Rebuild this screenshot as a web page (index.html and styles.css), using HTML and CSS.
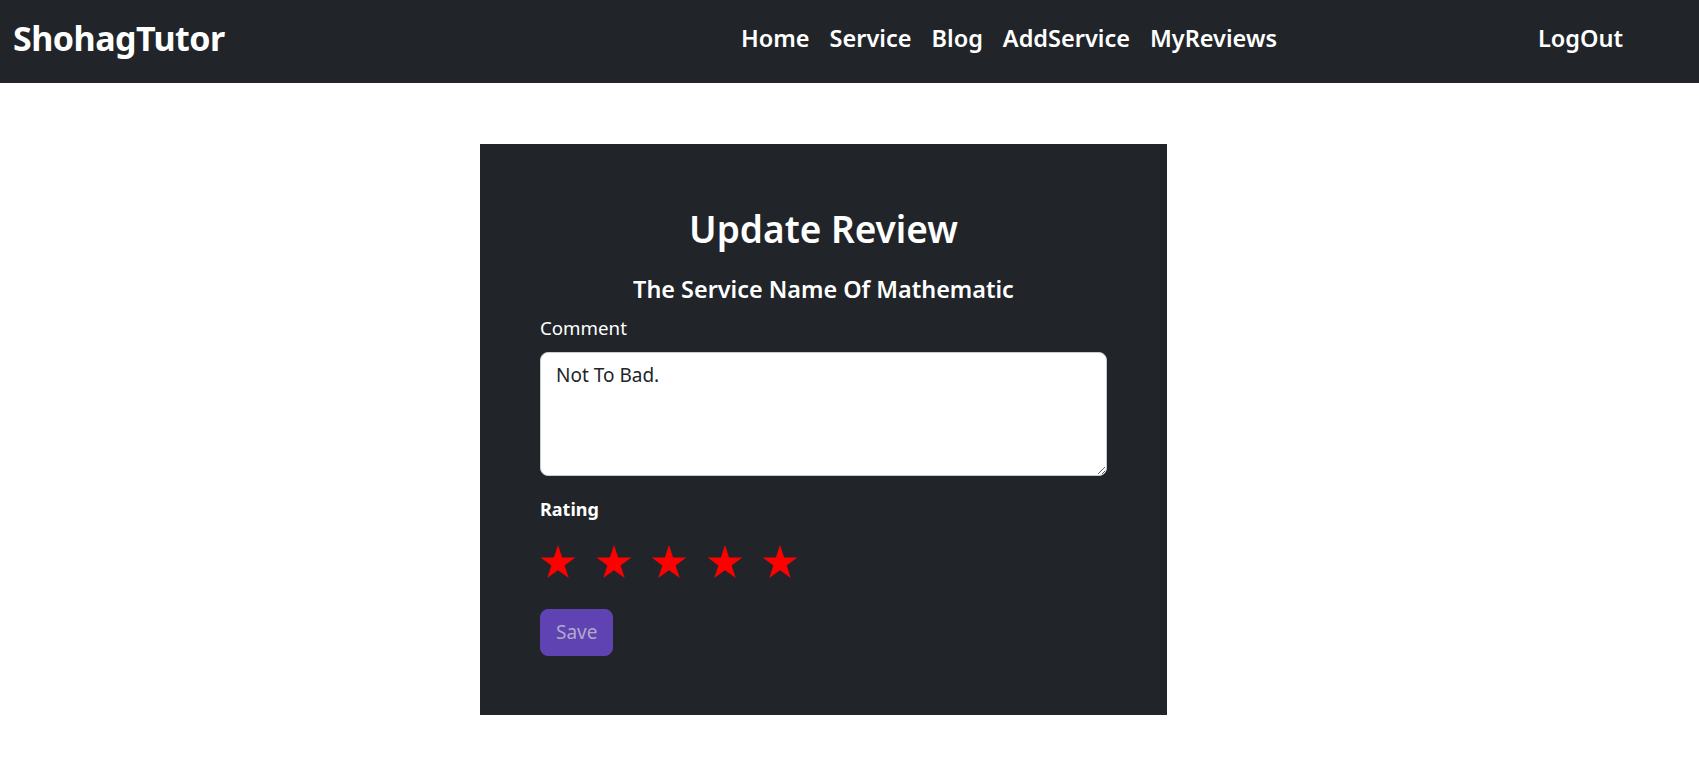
FILE: index.html
```html
<!DOCTYPE html>
<html lang="en">
<head>
<meta charset="utf-8">
<title>ShohagTutor - Update Review</title>
<link rel="stylesheet" href="styles.css">
</head>
<body>
<header class="navbar">
  <a class="brand" href="#">ShohagTutor</a>
  <nav class="nav-main">
    <a href="#">Home</a>
    <a href="#">Service</a>
    <a href="#">Blog</a>
    <a href="#">AddService</a>
    <a href="#">MyReviews</a>
  </nav>
  <a class="logout" href="#">LogOut</a>
</header>
<main class="page">
  <section class="card">
    <h1 class="title">Update Review</h1>
    <h4 class="subtitle">The Service Name Of Mathematic</h4>
    <label class="label" for="comment">Comment</label>
    <textarea id="comment" class="comment">Not To Bad.</textarea>
    <div class="rating-label">Rating</div>
    <div class="stars">
      <svg class="star" viewBox="0 0 100 95.1"><polygon points="50,0 61.8,36.33 100,36.33 69.1,58.77 80.9,95.1 50,72.65 19.1,95.1 30.9,58.77 0,36.33 38.2,36.33"/></svg>
      <svg class="star" viewBox="0 0 100 95.1"><polygon points="50,0 61.8,36.33 100,36.33 69.1,58.77 80.9,95.1 50,72.65 19.1,95.1 30.9,58.77 0,36.33 38.2,36.33"/></svg>
      <svg class="star" viewBox="0 0 100 95.1"><polygon points="50,0 61.8,36.33 100,36.33 69.1,58.77 80.9,95.1 50,72.65 19.1,95.1 30.9,58.77 0,36.33 38.2,36.33"/></svg>
      <svg class="star" viewBox="0 0 100 95.1"><polygon points="50,0 61.8,36.33 100,36.33 69.1,58.77 80.9,95.1 50,72.65 19.1,95.1 30.9,58.77 0,36.33 38.2,36.33"/></svg>
      <svg class="star" viewBox="0 0 100 95.1"><polygon points="50,0 61.8,36.33 100,36.33 69.1,58.77 80.9,95.1 50,72.65 19.1,95.1 30.9,58.77 0,36.33 38.2,36.33"/></svg>
    </div>
    <button class="save" type="button">Save</button>
  </section>
</main>
</body>
</html>
```

FILE: styles.css
```css
* { box-sizing: border-box; }
html, body { margin: 0; padding: 0; }
body {
  font-family: "Noto Sans", "Open Sans", sans-serif;
  background: #ffffff;
  color: #212529;
}
a { text-decoration: none; color: #ffffff; }

.navbar {
  height: 83px;
  background: #212529;
  display: grid;
  grid-template-columns: 741px 1fr auto;
  align-items: center;
  padding: 0 76px 6px 0;
}
.brand {
  padding-left: 13px;
  font-size: 34px;
  font-weight: 700;
  letter-spacing: -0.5px;
  line-height: 1;
  margin-bottom: 2px;
}
.nav-main {
  display: flex;
  gap: 20px;
  font-size: 23.5px;
  font-weight: 600;
  line-height: 1;
}
.logout {
  font-size: 23.5px;
  font-weight: 600;
  line-height: 1;
  margin-top: 1px;
}

.page {
  padding: 61px 0 50px 480px;
}
.card {
  width: 687px;
  height: 571px;
  background: #212529;
  padding: 62px 60px 0 60px;
  color: #ffffff;
  display: flex;
  flex-direction: column;
}
.title {
  margin: 0;
  text-align: center;
  font-size: 37px;
  font-weight: 600;
  line-height: 1.233;
}
.subtitle {
  margin: 23px 0 0;
  text-align: center;
  font-size: 23.4px;
  font-weight: 600;
  line-height: 1.2;
}
.label {
  margin-top: 11px;
  font-size: 18.7px;
  line-height: 1.5;
}
.comment {
  margin-top: 10px;
  width: 567px;
  height: 124px;
  border: 1px solid #c8ccd0;
  border-radius: 8px;
  padding: 8px 15px;
  font-family: inherit;
  font-size: 19px;
  line-height: 1.5;
  color: #212529;
  background: #ffffff;
  resize: vertical;
}
.rating-label {
  margin-top: 20px;
  font-size: 18px;
  font-weight: 700;
  line-height: 1.5;
}
.stars {
  margin-top: 22px;
  display: flex;
  gap: 19.5px;
}
.star {
  width: 36px;
  height: 33px;
  fill: #ff0000;
}
.save {
  margin-top: 31px;
  align-self: flex-start;
  height: 47px;
  padding: 0 15px;
  border: 1px solid #5f43b2;
  border-radius: 8px;
  background: #5f43b2;
  color: #b1a8cc;
  font-family: inherit;
  font-size: 19px;
  line-height: 1.5;
}
```
